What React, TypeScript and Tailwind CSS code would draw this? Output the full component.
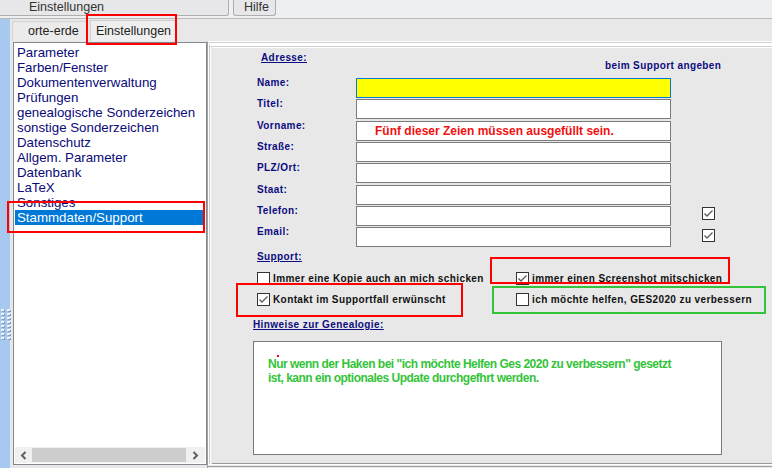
import type { ReactNode } from "react";

const listItems = [
  "Parameter",
  "Farben/Fenster",
  "Dokumentenverwaltung",
  "Prüfungen",
  "genealogische Sonderzeichen",
  "sonstige Sonderzeichen",
  "Datenschutz",
  "Allgem. Parameter",
  "Datenbank",
  "LaTeX",
  "Sonstiges",
  "Stammdaten/Support",
];

const fields = [
  "Name:",
  "Titel:",
  "Vorname:",
  "Straße:",
  "PLZ/Ort:",
  "Staat:",
  "Telefon:",
  "Email:",
];

const labelCls =
  "text-[10px] leading-[10px] font-bold tracking-[0.4px] text-[#0c0c80]";

function Check({ checked }: { checked?: boolean }) {
  return (
    <span className="flex h-[13px] w-[13px] shrink-0 items-center justify-center border border-[#333333] bg-white">
      {checked && (
        <svg width="11" height="11" viewBox="0 0 11 11">
          <path
            d="M1.5 5.5 L4 8 L9.5 2.5"
            fill="none"
            stroke="#5a5a5a"
            strokeWidth="1.3"
          />
        </svg>
      )}
    </span>
  );
}

function CheckRow({ checked, children }: { checked?: boolean; children: ReactNode }) {
  return (
    <div className="flex h-[13px] items-center gap-[3px]">
      <Check checked={checked} />
      <span className="text-[10px] leading-[13px] font-bold tracking-[0.4px] text-[#111111]">
        {children}
      </span>
    </div>
  );
}

function Chevron({ dir }: { dir: "left" | "right" }) {
  return (
    <svg width="7" height="9" viewBox="0 0 7 9">
      <path
        d={dir === "left" ? "M5.5 1 L2 4.5 L5.5 8" : "M1.5 1 L5 4.5 L1.5 8"}
        fill="none"
        stroke="#606060"
        strokeWidth="2"
      />
    </svg>
  );
}

function Grip() {
  return (
    <div className="grid grid-cols-2 gap-x-[3px] gap-y-[2px] px-[1px]">
      {Array.from({ length: 16 }).map((_, i) => (
        <span
          key={i}
          className="h-[2px] w-[3px] bg-[#eef3fb] shadow-[1px_1px_0_#7f9cc4]"
        />
      ))}
    </div>
  );
}

export default function App() {
  return (
    <div
      className="relative flex h-[468px] w-[772px] flex-col overflow-hidden bg-[#e8e8e8] leading-none"
      style={{ fontFamily: '"Liberation Sans", Arial, sans-serif' }}
    >
      {/* menu / top tabs */}
      <div className="flex h-[19px] shrink-0 items-start border-b border-[#b9b9b9] bg-[#eeeff2]">
        <div className="flex h-[16px] w-[229px] items-center rounded-br-[3px] border-b border-r border-[#adadad] bg-[#e7e7e9] pl-[29px] text-[12.5px] text-[#333333]">
          Einstellungen
        </div>
        <div className="ml-[4px] flex h-[16px] w-[43px] items-center rounded-b-[3px] border border-t-0 border-[#adadad] bg-[#e7e7e9] pl-[10px] text-[12.5px] text-[#333333]">
          Hilfe
        </div>
      </div>

      <div className="flex flex-1">
        {/* splitter strip */}
        <div className="flex w-[10px] shrink-0 flex-col bg-[#a8c9ef] pt-[290px]">
          <Grip />
        </div>

        <div className="flex flex-1 flex-col">
          {/* tabs row */}
          <div className="flex h-[22px] shrink-0 items-end pl-[2px]">
            <div className="flex h-[20px] w-[76px] items-center border-l border-t border-[#d4d4d4] bg-[#ebebeb] pl-[15px] text-[12.5px] text-[#222222]">
              orte-erde
            </div>
            <div className="ml-[2px] flex h-[21px] w-[86px] items-center border border-b-0 border-[#cfcfcf] border-r-[#9a9a9a] bg-[#efefef] pl-[5px] text-[12.5px] text-[#222222]">
              Einstellungen
            </div>
          </div>

          <div className="flex flex-1">
            {/* left list */}
            <div className="flex w-[197px] shrink-0 flex-col pb-[3px] pl-[3px] pt-[1px]">
              <div className="flex flex-1 flex-col border border-[#828790] bg-white p-[1px]">
                <div className="flex flex-1 flex-col pt-[1px]">
                  {listItems.map((item) => (
                    <div
                      key={item}
                      className={`h-[15px] whitespace-nowrap pl-[2px] text-[13.3px] leading-[15px] ${
                        item === "Stammdaten/Support"
                          ? "bg-[#0078d7] text-white"
                          : "text-[#0a0a7a]"
                      }`}
                    >
                      {item}
                    </div>
                  ))}
                </div>
                <div className="flex h-[16px] items-center bg-[#f0f0f0]">
                  <div className="flex w-[17px] justify-center">
                    <Chevron dir="left" />
                  </div>
                  <div className="h-[14px] flex-1 bg-[#cdcdcd]" />
                  <div className="flex w-[19px] justify-center">
                    <Chevron dir="right" />
                  </div>
                </div>
              </div>
            </div>

            {/* right panel */}
            <div className="flex flex-1 flex-col border-l border-t border-l-[#a0a0a0] border-t-white pb-[1px]">
              <div className="flex flex-1 flex-col border-l border-t border-l-white border-t-[#cfcfcf]">
                <div className="flex flex-1 flex-col border-l border-t-[3px] border-l-[#c8c8c8] border-t-white">
                  <div className="flex flex-1 flex-col border-l border-t border-l-white border-t-[#d0d0d0] pl-[1px]">
                    <div className="flex flex-1 flex-col border-b border-t border-b-[#9a9a9a] border-t-white pl-[1px]">
                      {/* header */}
                      <div className="flex h-[30px] items-start">
                        <div className={`${labelCls} ml-[48px] mt-[4px] w-[346px] leading-[12px] underline`}>
                          Adresse:
                        </div>
                        <div className={`${labelCls} -ml-[2px] mt-[12px] leading-[12px]`}>beim Support angeben</div>
                      </div>

                      {/* address fields */}
                      <div className="flex flex-col">
                        {fields.map((f) => (
                          <div key={f} className="flex h-[21.33px] items-start">
                            <div className={`${labelCls} ml-[44px] w-[99px]`}>{f}</div>
                            <div
                              className={`flex h-[20px] w-[315px] items-center ${
                                f === "Name:"
                                  ? "border border-[#0078d7] bg-[#ffff00]"
                                  : "border border-[#7a7a7a] bg-white"
                              }`}
                            >
                              {f === "Vorname:" && (
                                <span className="pl-[18px] text-[12px] font-bold text-[#f21010]">
                                  Fünf dieser Zeien müssen ausgefüllt sein.
                                </span>
                              )}
                            </div>
                            {(f === "Telefon:" || f === "Email:") && (
                              <div className={`ml-[31px] ${f === "Email:" ? "mt-[2px]" : "mt-[1px]"}`}>
                                <Check checked />
                              </div>
                            )}
                          </div>
                        ))}
                      </div>

                      {/* support */}
                      <div className={`${labelCls} ml-[44px] mt-[2px] h-[12px] leading-[12px] underline`}>
                        Support:
                      </div>
                      <div className="ml-[44px] mt-[9px] grid grid-cols-[259px_1fr] gap-y-[8px]">
                        <CheckRow>Immer eine Kopie auch an mich schicken</CheckRow>
                        <CheckRow checked>immer einen Screenshot mitschicken</CheckRow>
                        <CheckRow checked>Kontakt im Supportfall erwünscht</CheckRow>
                        <CheckRow>ich möchte helfen, GES2020 zu verbessern</CheckRow>
                      </div>

                      <div className={`${labelCls} ml-[40px] mt-[13px] h-[12px] leading-[12px] underline`}>
                        Hinweise zur Genealogie:
                      </div>
                      <div className="relative ml-[40px] mt-[10px] h-[114px] w-[469px] border border-[#7a7a7a] bg-white pl-[14px] pt-[15px]">
                        <span className="absolute left-[23px] top-[13px] h-[2px] w-[2px] bg-[#ff0000]" />
                        <p className="text-[12px] font-bold leading-[14px] tracking-[-0.5px] text-[#33c43a]">
                          Nur wenn der Haken bei "ich möchte Helfen Ges 2020 zu verbessern" gesetzt
                          <br />
                          ist, kann ein optionales Update durchgefhrt werden.
                        </p>
                      </div>
                    </div>
                  </div>
                </div>
              </div>
              <div className="h-[3px] border-b border-t border-b-[#a0a0a0] border-t-white" />
            </div>
          </div>
        </div>
      </div>

      {/* annotation boxes */}
      <div className="pointer-events-none absolute left-[86px] top-[14px] h-[31px] w-[91px] border-2 border-[#ff0000]" />
      <div className="pointer-events-none absolute left-[7px] top-[201px] h-[32px] w-[198px] border-2 border-[#ff0000]" />
      <div className="pointer-events-none absolute left-[490px] top-[257px] h-[27px] w-[240px] border-2 border-[#ff0000]" />
      <div className="pointer-events-none absolute left-[236px] top-[283px] h-[34px] w-[227px] border-2 border-[#ff0000]" />
      <div className="pointer-events-none absolute left-[492px] top-[286px] h-[28px] w-[274px] border-2 border-[#33c43a]" />
    </div>
  );
}
